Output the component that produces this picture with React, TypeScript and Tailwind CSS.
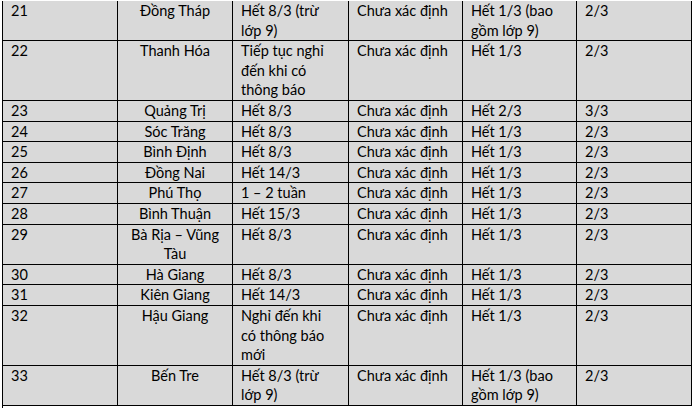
import React from 'react'

type Row = [string, string, string, string, string, string]

// line breaks follow the original Word table
const rows: Row[] = [
  ['21', 'Đồng Tháp', 'Hết 8/3 (trừ\nlớp 9)', 'Chưa xác định', 'Hết 1/3 (bao\ngồm lớp 9)', '2/3'],
  ['22', 'Thanh Hóa', 'Tiếp tục nghỉ\nđến khi có\nthông báo', 'Chưa xác định', 'Hết 1/3', '2/3'],
  ['23', 'Quảng Trị', 'Hết 8/3', 'Chưa xác định', 'Hết 2/3', '3/3'],
  ['24', 'Sóc Trăng', 'Hết 8/3', 'Chưa xác định', 'Hết 1/3', '2/3'],
  ['25', 'Bình Định', 'Hết 8/3', 'Chưa xác định', 'Hết 1/3', '2/3'],
  ['26', 'Đồng Nai', 'Hết 14/3', 'Chưa xác định', 'Hết 1/3', '2/3'],
  ['27', 'Phú Thọ', '1 – 2 tuần', 'Chưa xác định', 'Hết 1/3', '2/3'],
  ['28', 'Bình Thuận', 'Hết 15/3', 'Chưa xác định', 'Hết 1/3', '2/3'],
  ['29', 'Bà Rịa – Vũng\nTàu', 'Hết 8/3', 'Chưa xác định', 'Hết 1/3', '2/3'],
  ['30', 'Hà Giang', 'Hết 8/3', 'Chưa xác định', 'Hết 1/3', '2/3'],
  ['31', 'Kiên Giang', 'Hết 14/3', 'Chưa xác định', 'Hết 1/3', '2/3'],
  ['32', 'Hậu Giang', 'Nghỉ đến khi\ncó thông báo\nmới', 'Chưa xác định', 'Hết 1/3', '2/3'],
  ['33', 'Bến Tre', 'Hết 8/3 (trừ\nlớp 9)', 'Chưa xác định', 'Hết 1/3 (bao\ngồm lớp 9)', '2/3'],
]

const App = () => {
  return (
    <div className="w-[694px] h-[408px] bg-white overflow-hidden font-['Lato','Noto_Sans',sans-serif] text-[14.5px] leading-[19.6px] text-black">
      <div className="ml-[2px] mt-px w-[690px] border-l border-black bg-[#d9d9d9] grid grid-cols-[115px_115px_116px_114px_114px_115px]">
        {rows.map((r) =>
          r.map((cell, i) => (
            <div
              key={r[0] + '-' + i}
              className={
                'border-r border-b border-black px-[8px] whitespace-pre-line ' +
                (i === 1 ? 'text-center' : '')
              }
            >
              {cell}
            </div>
          ))
        )}
      </div>
      <div className="ml-[2px] h-4 border-l border-black"></div>
    </div>
  )
}

export default App
